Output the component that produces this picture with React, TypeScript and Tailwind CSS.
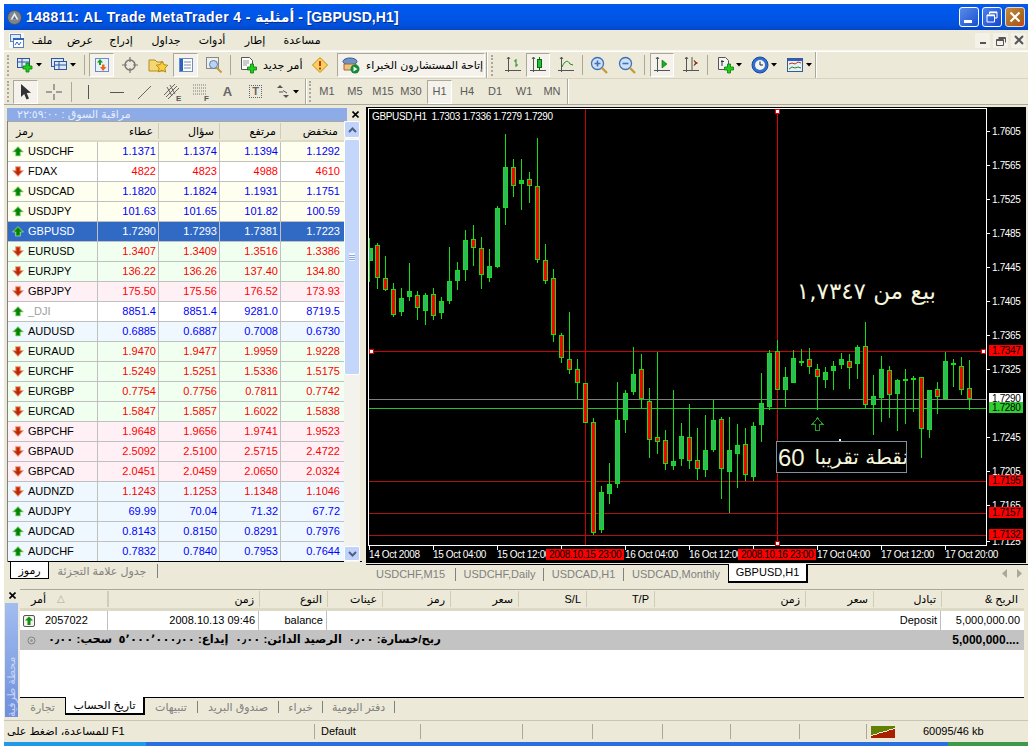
import React from "react";

// market watch rows: name, direction, bid, ask, high, low, background
const quotes: [string, boolean, string, string, string, string, string][] = [
  ["USDCHF", true, "1.1371", "1.1374", "1.1394", "1.1292", "bg-[#fffff0]"],
  ["FDAX", false, "4822", "4823", "4988", "4610", "bg-white"],
  ["USDCAD", true, "1.1820", "1.1824", "1.1931", "1.1751", "bg-[#fffff0]"],
  ["USDJPY", true, "101.63", "101.65", "101.82", "100.59", "bg-[#fffff0]"],
  ["GBPUSD", true, "1.7290", "1.7293", "1.7381", "1.7223", "bg-[#316ac5]"],
  ["EURUSD", false, "1.3407", "1.3409", "1.3516", "1.3386", "bg-[#f0fff0]"],
  ["EURJPY", false, "136.22", "136.26", "137.40", "134.80", "bg-[#f0fff0]"],
  ["GBPJPY", false, "175.50", "175.56", "176.52", "173.93", "bg-[#fff0f5]"],
  ["_DJI", true, "8851.4", "8851.4", "9281.0", "8719.5", "bg-white"],
  ["AUDUSD", true, "0.6885", "0.6887", "0.7008", "0.6730", "bg-[#f0f8ff]"],
  ["EURAUD", false, "1.9470", "1.9477", "1.9959", "1.9228", "bg-[#f0fff0]"],
  ["EURCHF", false, "1.5249", "1.5251", "1.5336", "1.5175", "bg-[#f0fff0]"],
  ["EURGBP", false, "0.7754", "0.7756", "0.7811", "0.7742", "bg-[#f0fff0]"],
  ["EURCAD", false, "1.5847", "1.5857", "1.6022", "1.5838", "bg-[#f0fff0]"],
  ["GBPCHF", false, "1.9648", "1.9656", "1.9741", "1.9523", "bg-[#fff0f5]"],
  ["GBPAUD", false, "2.5092", "2.5100", "2.5715", "2.4722", "bg-[#fff0f5]"],
  ["GBPCAD", false, "2.0451", "2.0459", "2.0650", "2.0324", "bg-[#fff0f5]"],
  ["AUDNZD", false, "1.1243", "1.1253", "1.1348", "1.1046", "bg-[#f0f8ff]"],
  ["AUDJPY", true, "69.99", "70.04", "71.32", "67.72", "bg-[#f0f8ff]"],
  ["AUDCAD", true, "0.8143", "0.8150", "0.8291", "0.7976", "bg-[#f0f8ff]"],
  ["AUDCHF", true, "0.7832", "0.7840", "0.7953", "0.7644", "bg-[#f0f8ff]"],
];

// candles: high, body top, body bottom, low, bull. Upper part y = 105 + v / 3
const upperCandles: [number, number, number, number, boolean][] = [
  [400, 430, 467, 530, true], [415, 421, 518, 552, false], [453, 520, 554, 557, false],
  [534, 553, 629, 636, false], [549, 580, 620, 633, true], [474, 558, 576, 588, true],
  [558, 571, 608, 645, false], [564, 571, 617, 660, true], [549, 568, 632, 645, false],
  [576, 588, 623, 642, true], [426, 528, 587, 597, true], [471, 495, 527, 555, true],
  [375, 405, 494, 528, true], [360, 403, 428, 483, false], [396, 430, 509, 552, false],
  [432, 483, 518, 531, true], [303, 309, 486, 489, true], [87, 186, 308, 360, true],
  [162, 186, 242, 276, false], [162, 225, 236, 315, true], [201, 222, 242, 294, false],
  [99, 243, 465, 474, false], [417, 465, 527, 537, false], [492, 519, 690, 711, false],
];
// lower part y = 340 + v / 3
const lowerCandles: [number, number, number, number, boolean][] = [
  [-21, -15, 55, 68, false], [-84, 58, 91, 102, false], [57, 88, 128, 177, false],
  [130, 130, 250, 250, false], [235, 247, 578, 585, false], [438, 457, 570, 579, true],
  [369, 433, 461, 492, true], [126, 241, 431, 444, true], [150, 160, 239, 279, true],
  [21, 103, 155, 165, true], [42, 88, 178, 205, false], [144, 184, 301, 354, false],
  [36, 292, 307, 342, false], [270, 301, 373, 390, false], [150, 364, 377, 390, true],
  [249, 289, 358, 378, true], [192, 292, 364, 387, false], [264, 361, 388, 420, false],
  [225, 331, 389, 411, true], [180, 241, 329, 335, true], [232, 238, 388, 477, false],
  [231, 331, 395, 519, true], [252, 316, 341, 444, true], [264, 313, 406, 423, false],
  [246, 259, 410, 423, true], [99, 190, 254, 306, true], [30, 39, 201, 210, true],
  [0, 34, 151, 151, false], [81, 112, 149, 201, true], [30, 55, 128, 130, true],
  [27, 63, 68, 78, true], [24, 58, 82, 102, false], [72, 88, 112, 210, false],
  [81, 97, 120, 144, true], [63, 79, 92, 150, true], [39, 58, 74, 87, true],
  [43, 64, 85, 147, false], [15, 22, 71, 118, true], [-54, 19, 196, 204, false],
  [105, 169, 196, 285, true], [48, 88, 173, 246, true], [78, 91, 166, 234, false],
  [117, 121, 163, 273, true], [87, 118, 119, 252, true], [108, 114, 119, 216, true],
  [112, 112, 268, 354, false], [150, 151, 271, 294, true], [126, 148, 172, 222, false],
  [36, 64, 177, 178, true], [57, 70, 76, 141, false], [51, 79, 149, 165, false],
  [60, 145, 178, 210, false],
];

const candles = [
  ...upperCandles.map((c) => c.slice(0, 4).map((v) => 105 + (v as number) / 3).concat(c[4] ? 1 : 0)),
  ...lowerCandles.map((c) => c.slice(0, 4).map((v) => 340 + (v as number) / 3).concat(c[4] ? 1 : 0)),
];

const priceTicks: [string, number][] = [
  ["1.7605", 131], ["1.7565", 165], ["1.7525", 199], ["1.7485", 233], ["1.7445", 267],
  ["1.7405", 301], ["1.7365", 335], ["1.7325", 369], ["1.7245", 437], ["1.7205", 471],
  ["1.7165", 505], ["1.7125", 541],
];
const priceBoxes: [string, number, string, string][] = [
  ["1.7347", 345, "#ff0000", "#000"], ["1.7290", 393, "#ffffff", "#000"], ["1.7280", 402, "#32cd32", "#000"],
  ["1.7195", 475, "#ff0000", "#000"], ["1.7157", 507, "#ff0000", "#000"], ["1.7132", 529, "#ff0000", "#000"],
];
const timeTicks: [string, number][] = [
  ["14 Oct 2008", 369], ["15 Oct 04:00", 433], ["15 Oct 12:00", 497], ["16 Oct 04:00", 625],
  ["16 Oct 12:00", 689], ["17 Oct 04:00", 817], ["17 Oct 12:00", 881], ["17 Oct 20:00", 945],
];

const font = "[font-family:'Liberation_Sans','DejaVu_Sans',sans-serif]";

function Ico({ w = 18, h = 18, children }: { w?: number; h?: number; children: React.ReactNode }) {
  return (
    <svg width={w} height={h} viewBox={`0 0 ${w} ${h}`} className="block shrink-0">
      {children}
    </svg>
  );
}

const DropArrow = () => (
  <svg width="6" height="4" viewBox="0 0 6 4" className="block shrink-0 ml-[2px]">
    <path d="M0 0h6L3 3.5z" fill="#000" />
  </svg>
);

const GreenPlus = ({ x, y }: { x: number; y: number }) => (
  <path
    transform={`translate(${x} ${y})`}
    d="M3 0h3v3h3v3H6v3H3V6H0V3h3z"
    fill="#1fcf1f"
    stroke="#0a7a0a"
    strokeWidth="0.8"
  />
);

const Axes = () => <path d="M4.5 1v15M1 14.5h16M3 3l1.500-2L6 3" stroke="#555" fill="none" />;

function UpArrow() {
  return (
    <svg width="12" height="11" viewBox="0 0 12 11" className="block shrink-0">
      <path d="M6 0.500L11.500 6H8.500V10H3.500V6H0.500z" fill="#12a612" stroke="#b8d8a0" strokeWidth="0.7" />
      <path d="M6 2L9 5.500H7V9H5V5.500H3z" fill="#0c7c0c" />
    </svg>
  );
}

function DownArrow() {
  return (
    <svg width="12" height="11" viewBox="0 0 12 11" className="block shrink-0">
      <path d="M3.500 0.500H8.500V4.500H11.500L6 10.500L0.500 4.500H3.500z" fill="#e0461c" stroke="#e8b090" strokeWidth="0.7" />
      <path d="M5 2H7V5.500H9L6 9L3 5.500H5z" fill="#b02c10" />
    </svg>
  );
}

const Sep = ({ className }: { className: string }) => (
  <div className={`w-px h-[20px] bg-[#aca899] shrink-0 ${className}`} />
);
const Grip = ({ className = "" }: { className?: string }) => (
  <div className={`w-[2px] h-[21px] shrink-0 border-l-2 border-dotted border-[#aca899] ${className}`} />
);
const EndBar = ({ className }: { className: string }) => (
  <div className={`w-[2px] self-stretch shrink-0 border-l border-[#aca899] border-r border-r-white ${className}`} />
);

function Btn({ className, active, children }: { className: string; active?: boolean; children: React.ReactNode }) {
  return (
    <div
      className={`flex items-center justify-center h-[24px] shrink-0 ${className} ${
        active ? "bg-[#f4f2ea] border border-t-[#aca899] border-l-[#aca899] border-r-white border-b-white" : ""
      }`}
    >
      {children}
    </div>
  );
}

function Toolbars() {
  return (
    <>
      <div className="flex items-center h-[27px] pl-[3px] border-t border-white">
        <Grip />
        <Btn className="ml-[5px] w-[29px]">
          <Ico w={18} h={16}>
            <rect x="1.500" y="1.500" width="12" height="9" fill="#dbe8fb" stroke="#31569b" />
            <path d="M1 5h13M6 1v9" stroke="#31569b" />
            <GreenPlus x={7} y={6} />
          </Ico>
          <DropArrow />
        </Btn>
        <Btn className="ml-[3px] w-[34px]">
          <Ico w={18} h={16}>
            <rect x="1.500" y="1.500" width="12" height="8" fill="#dbe8fb" stroke="#31569b" />
            <rect x="4.500" y="4.500" width="12" height="8" fill="#dbe8fb" stroke="#31569b" />
            <path d="M5 8h11M9 5v7" stroke="#31569b" />
          </Ico>
          <DropArrow />
        </Btn>
        <Sep className="ml-[4px]" />
        <Btn className="ml-[4px] w-[25px]" active>
          <Ico w={16} h={16}>
            <rect x="1.500" y="1.500" width="13" height="13" fill="#e8f0fb" stroke="#6a8cc8" />
            <path d="M6 2L9 5.500H7V8H5V5.500H3z" fill="#10a010" />
            <path d="M9 14L12.500 10H10.500V7.500H8V10H6z" fill="#e8661c" />
          </Ico>
        </Btn>
        <Btn className="ml-[3px] w-[25px]">
          <Ico w={18} h={18}>
            <circle cx="9" cy="9" r="5" fill="none" stroke="#777" strokeWidth="1.500" />
            <path d="M9 1v5M9 12v5M1 9h5M12 9h5" stroke="#777" strokeWidth="1.200" />
          </Ico>
        </Btn>
        <Btn className="ml-[3px] w-[25px]">
          <Ico w={20} h={18}>
            <path d="M1 4h6l2 2h6v9H1z" fill="#f6d775" stroke="#b58a1c" />
            <path d="M14 5l1.800 3.700 4 .6-2.900 2.800.7 4L14 14.200 10.400 16l.7-4-2.900-2.800 4-.6z" fill="#fbd13b" stroke="#b58a1c" />
          </Ico>
        </Btn>
        <Btn className="ml-[3px] w-[25px]" active>
          <Ico w={16} h={16}>
            <rect x="1.500" y="1.500" width="13" height="13" fill="#fff" stroke="#6a8cc8" />
            <rect x="2" y="2" width="3" height="12" fill="#2a62c0" />
            <path d="M6 5h7M6 8h7M6 11h7" stroke="#7a8ca8" />
          </Ico>
        </Btn>
        <Btn className="ml-[3px] w-[25px]">
          <Ico w={18} h={18}>
            <rect x="1.500" y="1.500" width="12" height="11" fill="#eee" stroke="#888" />
            <circle cx="8.500" cy="8.500" r="4" fill="#b9d3f0" stroke="#5a7ea8" />
            <path d="M11.500 11.500l5 5" stroke="#c79a3a" strokeWidth="2" />
          </Ico>
        </Btn>
        <Sep className="ml-[4px]" />
        <Btn className="ml-[5px] w-[69px] justify-start">
          <div className="ml-[4px]">
            <Ico w={17} h={18}>
              <path d="M1.500 1.500h8l3 3v9h-11z" fill="#fff" stroke="#555" />
              <path d="M3 5h6M3 7h6M3 9h4" stroke="#999" />
              <GreenPlus x={7.500} y={8} />
            </Ico>
          </div>
          <span className={`ml-[6px] text-[11px] text-black whitespace-nowrap ${font}`} dir="rtl">
            أمر جديد
          </span>
        </Btn>
        <Btn className="ml-[3px] w-[24px]">
          <Ico w={16} h={16}>
            <path d="M8 .500L15.500 8 8 15.500.500 8z" fill="#fbcf5b" stroke="#c48a1e" />
            <path d="M8 4v5M8 10.500v2" stroke="#b02c10" strokeWidth="1.800" />
          </Ico>
        </Btn>
        <Btn className="ml-[5px] w-[148px] justify-start" active>
          <div className="ml-[3px]">
            <Ico w={20} h={18}>
              <ellipse cx="9" cy="5.500" rx="7" ry="3.500" fill="#6f93c8" stroke="#3a5a90" />
              <path d="M3 8h12v6H3z" fill="#f0c080" stroke="#a06a30" />
              <circle cx="14" cy="13" r="4.500" fill="#118a3a" />
              <path d="M12.500 10.500l4 2.500-4 2.500z" fill="#fff" />
            </Ico>
          </div>
          <span className={`ml-[5px] text-[11px] text-black whitespace-nowrap ${font}`} dir="rtl">
            إتاحة المستشارون الخبراء
          </span>
        </Btn>
        <EndBar className="ml-[1px]" />
        <Grip className="ml-[3px]" />
        <Btn className="ml-[7px] w-[25px]">
          <Ico>
            <Axes />
            <path d="M12 3v8M10 5h2M12 9h2" stroke="#1a8a1a" />
          </Ico>
        </Btn>
        <Btn className="ml-[1px] w-[24px]" active>
          <Ico>
            <Axes />
            <rect x="8.500" y="3.500" width="4" height="8" fill="#1fbf3f" stroke="#0a6a0a" />
            <path d="M10.500 1v2M10.500 12v2" stroke="#0a6a0a" />
          </Ico>
        </Btn>
        <Btn className="ml-[3px] w-[25px]">
          <Ico>
            <Axes />
            <path d="M5 11C8 4 11 4 13 8l3 1" stroke="#1a8a1a" fill="none" />
          </Ico>
        </Btn>
        <Sep className="ml-[4px]" />
        <Btn className="ml-[3px] w-[25px]">
          <Ico>
            <circle cx="7.500" cy="7.500" r="6" fill="#cfe0f6" stroke="#3f72b5" strokeWidth="1.300" />
            <path d="M4.500 7.500h6M7.500 4.500v6" stroke="#3f72b5" strokeWidth="1.600" />
            <path d="M12 12l5 5" stroke="#c79a3a" strokeWidth="2.400" />
          </Ico>
        </Btn>
        <Btn className="ml-[3px] w-[25px]">
          <Ico>
            <circle cx="7.500" cy="7.500" r="6" fill="#cfe0f6" stroke="#3f72b5" strokeWidth="1.300" />
            <path d="M4.500 7.500h6" stroke="#3f72b5" strokeWidth="1.600" />
            <path d="M12 12l5 5" stroke="#c79a3a" strokeWidth="2.400" />
          </Ico>
        </Btn>
        <Sep className="ml-[5px]" />
        <Btn className="ml-[5px] w-[24px]" active>
          <Ico>
            <Axes />
            <path d="M9 4l5 4-5 4z" fill="#18b018" stroke="#0a6a0a" strokeWidth="0.600" />
          </Ico>
        </Btn>
        <Btn className="ml-[4px] w-[25px]">
          <Ico>
            <Axes />
            <path d="M10 1v13" stroke="#555" />
            <path d="M16 7h-3M12 4.500L13.500 7 12 9.500 15 7z" fill="#8a2a10" stroke="#8a2a10" strokeWidth="0.800" />
          </Ico>
        </Btn>
        <Sep className="ml-[4px]" />
        <Btn className="ml-[5px] w-[32px]">
          <Ico w={17} h={18}>
            <path d="M1.500 1.500h7l3 3v9h-10z" fill="#f4f4f4" stroke="#555" />
            <path d="M4 5.500h3M5 4v6" stroke="#333" />
            <GreenPlus x={7.500} y={8} />
          </Ico>
          <DropArrow />
        </Btn>
        <Btn className="ml-[2px] w-[33px]">
          <Ico>
            <circle cx="9" cy="9" r="8" fill="#2f6fd0" stroke="#1a4a9a" />
            <circle cx="9" cy="9" r="5" fill="#f2f2f2" />
            <path d="M9 5.500V9h3" stroke="#222" fill="none" />
          </Ico>
          <DropArrow />
        </Btn>
        <Btn className="ml-[3px] w-[32px]">
          <Ico>
            <rect x="1.500" y="2.500" width="15" height="13" fill="#e7eff9" stroke="#3a5a90" />
            <rect x="2" y="3" width="14" height="2" fill="#2a62c0" />
            <path d="M3 8l3-1 3 1 3-2 3 1" stroke="#c0341a" fill="none" />
            <path d="M3 13l3-2 3 1 3-1 3 1" stroke="#18901a" fill="none" />
          </Ico>
          <DropArrow />
        </Btn>
        <EndBar className="ml-[0px]" />
      </div>
      <div className="flex items-center h-[26px] pl-[3px] border-t border-[#d6d3c0]">
        <Grip />
        <Btn className="ml-[4px] w-[25px]" active>
          <Ico w={14} h={18}>
            <path d="M2 1l0 13 3.200-3 2.300 5.500 2.500-1-2.300-5.500 4.300-.2z" fill="#333" />
          </Ico>
        </Btn>
        <Btn className="ml-[3px] w-[25px]">
          <Ico>
            <path d="M9 1v6M9 11v6M1 9h6M11 9h6" stroke="#555" />
          </Ico>
        </Btn>
        <Sep className="ml-[5px]" />
        <Btn className="ml-[3px] w-[25px]">
          <Ico>
            <path d="M9.500 2v14" stroke="#555" />
          </Ico>
        </Btn>
        <Btn className="ml-[4px] w-[25px]">
          <Ico>
            <path d="M2 9.500h14" stroke="#555" />
          </Ico>
        </Btn>
        <Btn className="ml-[2px] w-[25px]">
          <Ico>
            <path d="M3 16L16 3" stroke="#666" />
          </Ico>
        </Btn>
        <Btn className="ml-[3px] w-[26px]">
          <Ico w={20} h={20}>
            <path d="M2 13L13 2M4 15L15 4M6 17L17 6M5 5l5 9M8 3l5 9" stroke="#666" />
            <text x="14" y="19" fontSize="8" fontWeight="700" fill="#555" className={font}>
              E
            </text>
          </Ico>
        </Btn>
        <Btn className="ml-[3px] w-[25px]">
          <Ico w={20} h={20}>
            <path d="M2 3h14M2 6h14M2 9h14M2 12h14" stroke="#777" strokeDasharray="1 1" />
            <text x="13" y="19" fontSize="8" fontWeight="700" fill="#555" className={font}>
              F
            </text>
          </Ico>
        </Btn>
        <Btn className="ml-[2px] w-[25px]">
          <span className={`text-[13px] font-bold text-[#666] ${font}`}>A</span>
        </Btn>
        <Btn className="ml-[3px] w-[25px]">
          <div className="w-[13px] h-[13px] flex items-center justify-center border border-dotted border-[#666]">
            <span className={`text-[11px] font-bold text-[#666] leading-none ${font}`}>T</span>
          </div>
        </Btn>
        <Btn className="ml-[3px] w-[32px]">
          <Ico w={16} h={16}>
            <path d="M5 1L8 4H2z" fill="#555" />
            <path d="M11 14l3-3H8z" fill="#555" />
            <path d="M4 8h4M8 6.500L12 9" stroke="#555" />
          </Ico>
          <DropArrow />
        </Btn>
        <EndBar className="ml-[2px]" />
        <Grip className="ml-[2px]" />
        <div className={`flex items-center text-[11px] text-[#5a5a5a] ${font}`}>
          <Btn className="ml-[2px] w-[28px]">M1</Btn>
          <Btn className="w-[28px]">M5</Btn>
          <Btn className="w-[28px]">M15</Btn>
          <Btn className="w-[28px]">M30</Btn>
          <Btn className="ml-[2px] w-[25px]" active>
            H1
          </Btn>
          <Btn className="ml-px w-[28px]">H4</Btn>
          <Btn className="w-[28px]">D1</Btn>
          <Btn className="ml-px w-[28px]">W1</Btn>
          <Btn className="w-[28px]">MN</Btn>
        </div>
        <EndBar className="ml-px" />
      </div>
    </>
  );
}

function MarketWatch() {
  return (
    <div className={`w-[362px] shrink-0 pl-[3px] pt-[2px] flex flex-col ${font}`}>
      <div className="flex items-center h-[14px] pr-[2px]">
        <div className="w-[340px] h-[13px] bg-[#8dabe6] flex items-center pl-[10px] text-[11px] text-[#e6edfb] leading-none" dir="ltr">
          <span dir="rtl">مراقبة السوق : ٢٢:٥٩:٠٠</span>
        </div>
        <svg width="7" height="7" viewBox="0 0 7 7" className="ml-[5px]">
          <path d="M.5.500l6 6M6.500.500l-6 6" stroke="#000" strokeWidth="1.600" />
        </svg>
      </div>
      <div className="h-[441px] flex border-l border-[#808080]">
        <div className="w-[336px] flex flex-col">
          <div className="h-[21px] grid grid-cols-[90px_61px_61px_61px_63px] bg-[#ece9d8] border-t border-[#aca899] border-b-2 border-b-[#dcd9c4] text-[11px] text-black items-center">
            <span className="pl-[8px]" dir="rtl">
              <span className="block text-left">رمز</span>
            </span>
            <span className="text-right pr-[5px] border-r border-[#cfccb8]">عطاء</span>
            <span className="text-right pr-[5px] border-r border-[#cfccb8]">سؤال</span>
            <span className="text-right pr-[4px] border-r border-[#cfccb8]">مرتفع</span>
            <span className="text-right pr-[6px]">منخفض</span>
          </div>
          {quotes.map(([name, up, ...rest]) => {
            const selected = name === "GBPUSD";
            const cellColor = selected ? "text-white" : up ? "text-[#0000ff]" : "text-[#ff0000]";
            const bg = rest[4];
            return (
              <div
                key={name}
                className={`h-[20px] grid grid-cols-[90px_61px_61px_61px_63px] text-[11px] border-b border-[#c0c0c0] ${bg}`}
              >
                <div className="flex items-center pl-[4px] border-r border-[#c0c0c0]">
                  {up ? <UpArrow /> : <DownArrow />}
                  <span className={`ml-[4px] ${selected ? "text-white" : name === "_DJI" ? "text-[#a0a0a0]" : "text-black"}`}>
                    {name}
                  </span>
                </div>
                {rest.slice(0, 4).map((v, i) => (
                  <div
                    key={i}
                    className={`flex items-center justify-end pr-[2px] ${i < 3 ? "border-r border-[#c0c0c0]" : "pr-[4px]"} ${cellColor}`}
                  >
                    {v}
                  </div>
                ))}
              </div>
            );
          })}
        </div>
        <div className="w-[16px] flex flex-col bg-[#f3f2ec] relative">
          <div className="h-[17px] bg-[#c1d3fb] border border-white rounded-[2px] flex items-center justify-center">
            <svg width="9" height="6" viewBox="0 0 9 6">
              <path d="M1 5l3.500-3.500L8 5" stroke="#4d6185" strokeWidth="2" fill="none" />
            </svg>
          </div>
          <div className="h-[236px] mt-[1px] bg-[#c5d6fb] border border-white rounded-[2px] flex items-center justify-center">
            <div className="w-[6px] h-[8px] border-t border-b border-[#eef3fe] bg-[linear-gradient(#eef3fe_1px,#8faadc_1px)] bg-[length:6px_2px]" />
          </div>
          <div className="flex-1" />
          <div className="h-[15px] mb-[1px] bg-[#c1d3fb] border border-white rounded-[2px] flex items-center justify-center">
            <svg width="9" height="6" viewBox="0 0 9 6">
              <path d="M1 1l3.500 3.500L8 1" stroke="#4d6185" strokeWidth="2" fill="none" />
            </svg>
          </div>
        </div>
      </div>
      <div className="h-[20px] flex items-start border-t border-black ml-px mr-[4px] text-[11px] -mt-px">
        <div className="ml-[2px] w-[39px] h-[17px] bg-white border border-t-0 border-black flex items-center justify-center text-black">
          رموز
        </div>
        <div className="w-[109px] h-[14px] mt-[2px] flex items-center justify-center text-[#808080] border-r border-[#808080] pr-[2px]">
          جدول علامة التجزئة
        </div>
      </div>
    </div>
  );
}

function Chart() {
  const mono = "[font-family:'Liberation_Sans',sans-serif]";
  const label = { fontSize: 10, letterSpacing: -0.35 };
  return (
    <svg width="660" height="456" viewBox="366 107 660 456" className={`block bg-black ${mono}`} shapeRendering="crispEdges">
      <path d="M368 108.500H987M368.500 108V546M986.500 108V546M368 545.500H987" stroke="#fff" />
      <rect x="585" y="109" width="1" height="436" fill="#c80000" />
      <rect x="777" y="109" width="1" height="436" fill="#e00000" />
      <rect x="369" y="351" width="617" height="1" fill="#d00000" />
      <rect x="369" y="481" width="617" height="1" fill="#b01010" />
      <rect x="369" y="513" width="617" height="1" fill="#b01010" />
      <rect x="369" y="535" width="617" height="1" fill="#b01010" />
      <rect x="369" y="399" width="617" height="1" fill="#808080" />
      <rect x="369" y="408" width="617" height="1" fill="#22c322" />
      {candles.map((c, i) => {
        const x = 369 + 8 * i;
        const [hi, top, bot, lo, bull] = c.map((v) => Math.round(v));
        return (
          <g key={i}>
            <rect x={x} y={hi} width="1" height={Math.max(lo - hi, 1)} fill="#14e014" />
            <rect x={Math.max(x - 2, 369)} y={top} width={x - 2 < 369 ? 4 : 5} height={Math.max(bot - top, 2)} fill="#14e014" />
            {bot - top > 2 && (
              <rect x={Math.max(x - 1, 369)} y={top + 1} width={3} height={bot - top - 2} fill={bull ? "#2fb85f" : "#ff0000"} />
            )}
          </g>
        );
      })}
      {/* line handles */}
      {[
        [775, 109],
        [775, 541],
        [369, 349],
        [981, 349],
      ].map(([x, y], i) => (
        <rect key={i} x={x + 0.5} y={y + 0.5} width="4" height="4" fill="#fff" stroke="#e00000" />
      ))}
      <text x="372" y="120" fill="#fff" {...label} xmlSpace="preserve">
        GBPUSD,H1  1.7303 1.7336 1.7279 1.7290
      </text>
      <text x="936" y="299" fill="#f5f5dc" fontSize="23" textAnchor="start" direction="rtl" className="[font-family:'DejaVu_Sans',sans-serif]" shapeRendering="auto">
        بيع من ١,٧٣٤٧
      </text>
      <path d="M817.500 418l5 6h-3v6h-4v-6h-3z" fill="none" stroke="#22a022" />
      <rect x="839" y="439" width="2" height="2" fill="#fff" />
      <rect x="776.500" y="441.500" width="130" height="31" fill="#000" stroke="#8090a0" />
      <svg x="777" y="442" width="129" height="30" viewBox="0 0 129 30">
        <text x="1" y="24" fill="#f5f5dc" fontSize="24">
          60
        </text>
        <text x="131" y="22" fill="#f5f5dc" fontSize="20" textAnchor="start" direction="rtl" className="[font-family:'DejaVu_Sans',sans-serif]">
          نقطة تقريبا
        </text>
      </svg>
      {priceTicks.map(([t, y]) => (
        <g key={t}>
          <rect x="987" y={y} width="3" height="1" fill="#fff" />
          <text x="992" y={y + 4} fill="#fff" {...label}>
            {t}
          </text>
        </g>
      ))}
      {priceBoxes.map(([t, y, bg, fg]) => (
        <g key={t}>
          <rect x="989" y={y} width="34" height="11" fill={bg} />
          <text x="992" y={y + 9} fill={fg} {...label}>
            {t}
          </text>
        </g>
      ))}
      {[369, 433, 497, 561, 625, 689, 753, 817, 881, 945].map((x) => (
        <rect key={x} x={x} y="546" width="1" height="4" fill="#fff" />
      ))}
      {timeTicks.map(([t, x]) => (
        <text key={t} x={x} y="558" fill="#fff" {...label}>
          {t}
        </text>
      ))}
      <rect x="546" y="549" width="78" height="11" fill="#ff0000" />
      <text x="549" y="558" fill="#000" {...label}>
        2008.10.15 23:00
      </text>
      <rect x="738" y="549" width="78" height="11" fill="#ff0000" />
      <text x="741" y="558" fill="#000" {...label}>
        2008.10.16 23:00
      </text>
    </svg>
  );
}

function ChartPane() {
  const tabs: [string, string][] = [
    ["USDCHF,M15", "w-[90px] border-r"],
    ["USDCHF,Daily", "w-[88px] border-r"],
    ["USDCAD,H1", "w-[80px] border-r"],
    ["USDCAD,Monthly", "w-[104px]"],
  ];
  return (
    <div className={`flex-1 flex flex-col pt-[2px] ${font}`}>
      <Chart />
      <div className="h-[20px] mt-[1px] flex items-start border-t border-black text-[11px] text-[#808080]">
        {tabs.map(([t, cls]) => (
          <div key={t} className={`h-[13px] mt-[3px] flex items-center justify-center border-[#808080] ${cls}`}>
            {t}
          </div>
        ))}
        <div className="w-[80px] h-[19px] -mt-px bg-white border border-t-0 border-black border-r-2 border-b-2 flex items-center justify-center text-black">
          GBPUSD,H1
        </div>
        <div className="ml-auto mr-[6px] mt-[4px] flex gap-[10px]">
          <svg width="5" height="9" viewBox="0 0 5 9">
            <path d="M5 0v9L0 4.500z" fill="#aca899" />
          </svg>
          <svg width="5" height="9" viewBox="0 0 5 9">
            <path d="M0 0v9l5-4.500z" fill="#aca899" />
          </svg>
        </div>
      </div>
    </div>
  );
}

function Terminal() {
  const heads = ["أمر", "زمن", "النوع", "عينات", "رمز", "سعر", "S/L", "T/P", "زمن", "سعر", "تبادل", "الربح &"];
  const grid = "grid grid-cols-[88px_151px_68px_55px_68px_68px_68px_68px_151px_68px_68px_82px]";
  return (
    <div className={`h-[135px] flex ${font} text-[11px]`}>
      <div className="w-[16px] shrink-0 pl-px flex flex-col">
        <svg width="7" height="7" viewBox="0 0 7 7" className="ml-[4px] mt-[7px]">
          <path d="M.5.500l6 6M6.500.500l-6 6" stroke="#000" strokeWidth="1.600" />
        </svg>
        <div className="mt-[4px] h-[114px] w-[13px] bg-[linear-gradient(#a3bdf0,#6f8fdc)] flex items-start justify-center">
          <span className="[writing-mode:vertical-rl] rotate-180 h-full text-[#c8d6f4] text-[11px] leading-[13px] text-left">
            محطة طرفية
          </span>
        </div>
      </div>
      <div className="w-[1004px] flex flex-col">
        <div className={`mt-[4px] h-[22px] bg-[#ece9d8] border-t border-[#aca899] border-b-[3px] border-b-[#dcd9c4] items-center ${grid}`}>
          {heads.map((h, i) =>
            i === 0 ? (
              <span key={i} className="flex items-center pl-[11px] text-black border-r border-[#cfccb8]">
                <span>أمر</span>
                <span className="ml-[11px] text-[#b0ac9a] text-[10px] leading-none">△</span>
              </span>
            ) : (
              <span key={i} dir="rtl" className="text-black border-l border-[#cfccb8]">
                <span className="block text-right pr-[5px]">{h}</span>
              </span>
            ),
          )}
        </div>
        <div className={`h-[19px] bg-white text-black ${grid}`}>
          <div className="flex items-center pl-[3px] border-r border-[#c0c0c0]">
            <div className="w-[12px] h-[12px] border border-[#555] rounded-[2px] bg-[#f2f2ee] flex items-center justify-center">
              <svg width="8" height="9" viewBox="0 0 8 9">
                <path d="M4 .500L8 4.500H5.500V9H2.500V4.500H0z" fill="#0e8f0e" />
              </svg>
            </div>
            <span className="ml-[10px]">2057022</span>
          </div>
          <div className="flex items-center justify-end pr-[3px] border-r border-[#c0c0c0]">2008.10.13 09:46</div>
          <div className="flex items-center justify-end pr-[3px] border-r border-[#c0c0c0]">balance</div>
          <div className="col-span-8 flex items-center justify-end pr-[3px] border-r border-[#c0c0c0]">Deposit</div>
          <div className="flex items-center justify-end pr-[3px]">5,000,000.00</div>
        </div>
        <div className="h-[20px] bg-[#c3c3c3] flex items-center font-bold text-black text-[12px]">
          <svg width="9" height="9" viewBox="0 0 9 9" className="ml-[7px]">
            <circle cx="4.500" cy="4.500" r="3.500" fill="#c8c8c8" stroke="#808080" />
            <circle cx="4.500" cy="4.500" r="1.500" fill="#9a9a9a" />
          </svg>
          <span className="ml-[12px] whitespace-nowrap text-[11.5px]" dir="rtl">
            ربح/خسارة: ٠٫٠٠&nbsp; الرصيد الدائن: ٠٫٠٠&nbsp; إيداع: ٥٬٠٠٠٬٠٠٠٫٠٠&nbsp; سحب: ٠٫٠٠
          </span>
          <span className="ml-auto mr-[5px]">5,000,000....</span>
        </div>
        <div className="h-[47px] bg-white" />
        <div className="h-[20px] border-t border-black flex items-start text-[#808080]">
          <div className="w-[45px] h-[13px] mt-[3px] flex items-center justify-center">تجارة</div>
          <div className="w-[80px] h-[18px] -mt-px bg-white border border-t-0 border-black border-r-2 border-b-2 flex items-center justify-center text-black">
            تاريخ الحساب
          </div>
          <div className="w-[53px] h-[12px] mt-[3px] flex items-center justify-center border-r border-[#808080]">تنبيهات</div>
          <div className="w-[81px] h-[12px] mt-[3px] flex items-center justify-center border-r border-[#808080]">صندوق البريد</div>
          <div className="w-[44px] h-[12px] mt-[3px] flex items-center justify-center border-r border-[#808080]">خبراء</div>
          <div className="w-[72px] h-[12px] mt-[3px] flex items-center justify-center border-r border-[#808080]">دفتر اليومية</div>
        </div>
      </div>
    </div>
  );
}

function StatusBar() {
  const cell = "h-[15px] border-r border-[#aca899] shrink-0";
  const bars = Array.from({ length: 12 }, (_, i) => i);
  return (
    <div className={`h-[22px] flex items-center border-t border-[#c8c5b2] bg-[#ece9d8] text-[11px] text-black ${font}`}>
      <div className={`w-[311px] pl-[3px] flex items-center ${cell}`}>للمساعدة، اضغط على F1</div>
      <div className={`w-[106px] pl-[6px] flex items-center ${cell}`}>Default</div>
      <div className={`w-[102px] ${cell}`} />
      <div className={`w-[70px] ${cell}`} />
      <div className={`w-[70px] ${cell}`} />
      <div className={`w-[68px] ${cell}`} />
      <div className={`w-[69px] ${cell}`} />
      <div className={`w-[67px] ${cell}`} />
      <svg width="24" height="12" viewBox="0 0 24 12" className="ml-[4px] shrink-0" shapeRendering="crispEdges">
        {bars.map((i) => {
          const split = 9 - Math.round((i / 11) * 7);
          return (
            <g key={i}>
              <rect x={i * 2} y="0" width="1.500" height={split} fill="#5f8000" />
              <rect x={i * 2} y={split + 1} width="1.500" height={11 - split} fill="#a82000" />
            </g>
          );
        })}
      </svg>
      <span className="ml-[28px]">60095/46 kb</span>
    </div>
  );
}

const menus: [string, string][] = [
  ["ملف", "w-[36px]"],
  ["عرض", "w-[40px]"],
  ["إدراج", "w-[42px]"],
  ["جداول", "w-[48px]"],
  ["أدوات", "w-[44px]"],
  ["إطار", "w-[42px]"],
  ["مساعدة", "w-[52px]"],
];

export default function App() {
  return (
    <div className="w-[1032px] h-[746px] bg-white pt-[4px] pl-[4px] overflow-hidden">
      <div className="w-[1024px] h-[742px] bg-[#ece9d8] flex flex-col overflow-hidden">
        <div className="h-[26px] shrink-0 flex items-center bg-[linear-gradient(#0a5be4,#0058ee_12%,#0056e6_50%,#0150da_85%,#0246c4)] pl-[3px] pr-[3px]">
          <svg width="15" height="15" viewBox="0 0 15 15" className="shrink-0">
            <circle cx="7.500" cy="7.500" r="7" fill="#7d8590" stroke="#44505f" />
            <path d="M7.500 2.500l4 7h-8z" fill="#e8ebef" />
            <path d="M7.500 6l2 3.500h-4z" fill="#5a6472" />
          </svg>
          <span className={`ml-[4px] text-[14px] text-white font-bold whitespace-nowrap [text-shadow:1px_1px_0_#0a2c8a] ${font}`}>
            <span className="tracking-[0.4px]">148811: AL Trade MetaTrader 4 - </span>
            أمثلية
            <span className="tracking-[0.1px]"> - [GBPUSD,H1]</span>
          </span>
          <div className="ml-auto flex gap-[3px]">
            <div className="w-[20px] h-[20px] rounded-[3px] border border-white bg-[linear-gradient(135deg,#5a8be8,#1a50d0)] flex items-end pl-[4px] pb-[3px]">
              <div className="w-[8px] h-[3px] bg-white" />
            </div>
            <div className="w-[20px] h-[20px] rounded-[3px] border border-white bg-[linear-gradient(135deg,#4a82ec,#1446cc)] flex items-center justify-center">
              <svg width="12" height="12" viewBox="0 0 12 12">
                <path d="M3.500 3V1h7.500v6H9M1 4h7.500v7H1z" stroke="#fff" fill="none" />
                <path d="M1 4.500h7.500M3.500 1.500H11" stroke="#fff" strokeWidth="1.500" />
              </svg>
            </div>
            <div className="w-[20px] h-[20px] rounded-[3px] border border-[#e6dcc8] bg-[linear-gradient(135deg,#c98a3e,#a8641c_70%,#d8401a)] flex items-center justify-center">
              <svg width="12" height="12" viewBox="0 0 12 12">
                <path d="M1.500 1.500l9 9M10.500 1.500l-9 9" stroke="#fff" strokeWidth="2.200" />
              </svg>
            </div>
          </div>
        </div>

        <div className="h-[21px] shrink-0 flex items-center border-b border-[#f8f7f0]">
          <svg width="15" height="15" viewBox="0 0 15 15" className="ml-[5px] shrink-0">
            <rect x="0" y="0" width="15" height="15" fill="#f8f8f4" />
            <rect x="1.500" y="1.500" width="10" height="7" fill="#dfeafa" stroke="#5a7ec0" />
            <rect x="4.500" y="5.500" width="10" height="9" fill="#fff" stroke="#5a7ec0" />
            <path d="M4 6h11" stroke="#2a62c0" strokeWidth="2" />
            <path d="M6 12l2-3 2 3 2-3" stroke="#2a62c0" fill="none" />
          </svg>
          <div className={`flex items-center text-[11px] text-black ${font}`}>
            {menus.map(([m, w]) => (
              <div key={m} className={`${w} text-center`}>
                {m}
              </div>
            ))}
          </div>
          <div className="ml-auto mr-[2px] flex gap-[3px] text-[#555]">
            {[
              <path key="a" d="M4 10h6" stroke="#555" strokeWidth="2" />,
              <path key="b" d="M4.500 4.500h7v5M2.500 6.500h7v6h-7zM2.500 7.500h7M4.500 5.500h7" stroke="#555" fill="none" />,
              <path key="c" d="M3 3l8 8M11 3l-8 8" stroke="#555" strokeWidth="2" />,
            ].map((p, i) => (
              <div key={i} className="w-[15px] h-[15px] bg-[#f4f2e8] flex items-center justify-center">
                <svg width="14" height="14" viewBox="0 0 14 14">
                  {p}
                </svg>
              </div>
            ))}
          </div>
        </div>

        <Toolbars />

        <div className="h-[481px] shrink-0 flex border-t border-[#aca899]">
          <MarketWatch />
          <ChartPane />
        </div>

        <Terminal />
        <StatusBar />
        <div className="flex-1 flex">
          <div className="w-[142px] bg-[#1f9ae8]" />
          <div className="flex-1 bg-[#2a6fe0]" />
          <div className="w-[80px] bg-[#3e9a4a]" />
        </div>
      </div>
    </div>
  );
}
